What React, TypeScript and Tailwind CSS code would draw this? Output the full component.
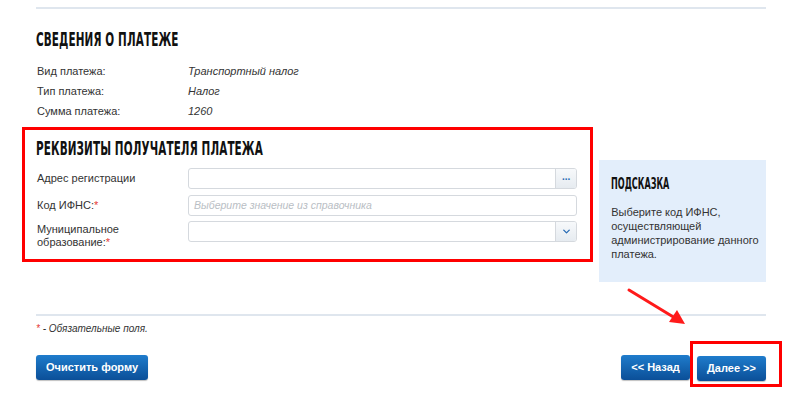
import { ChevronDown } from "lucide-react";

const font = "font-['Liberation_Sans',Arial,sans-serif]";
const headFont = "font-['DejaVu_Sans_Condensed','DejaVu_Sans',sans-serif]";

type Row = { label: string; value: string };

const details: Row[] = [
  { label: "Вид платежа:", value: "Транспортный налог" },
  { label: "Тип платежа:", value: "Налог" },
  { label: "Сумма платежа:", value: "1260" },
];

const Heading = ({ children }: { children: string }) => (
  <h2
    className={`${headFont} font-bold text-[20px] leading-[20px] text-[#111] whitespace-nowrap origin-left scale-x-[0.58] tracking-[0.2px]`}
  >
    {children}
  </h2>
);

const Star = () => <span className="text-[#e53935]">*</span>;

const BlueButton = ({ children, className = "" }: { children: string; className?: string }) => (
  <button
    className={`h-[25px] rounded-[3px] bg-gradient-to-b from-[#1f7ccc] to-[#0b4f98] text-white text-[11px] font-bold shadow-[0_1px_1px_rgba(0,0,0,0.25)] ${className}`}
  >
    {children}
  </button>
);

export default function App() {
  return (
    <div className={`${font} relative w-[800px] h-[393px] bg-white overflow-hidden text-[#333]`}>
      <div className="pl-[36px] pr-[34px]">
        <div className="mt-[7px] h-[2px] bg-[#dfe6ee]" />

        <div className="mt-[20px]">
          <Heading>СВЕДЕНИЯ О ПЛАТЕЖЕ</Heading>
        </div>

        <div className="mt-[12px] text-[11px]">
          {details.map((row) => (
            <div key={row.label} className="flex h-[20px] items-center">
              <span className="w-[152px] pl-[1px]">{row.label}</span>
              <span className="italic">{row.value}</span>
            </div>
          ))}
        </div>

        <div className="mt-[6px] flex items-start">
          <section className="-ml-[14px] w-[572px] h-[135px] border-[3px] border-[#ff0000] pl-[11px] pr-[13px]">
            <div className="mt-[8px]">
              <Heading>РЕКВИЗИТЫ ПОЛУЧАТЕЛЯ ПЛАТЕЖА</Heading>
            </div>

            <div className="mt-[10px] flex items-center h-[21px] text-[11px]">
              <span className="w-[152px] pl-[1px]">Адрес регистрации</span>
              <div className="flex-1 flex h-[21px] border border-[#d5d9de] rounded-[3px] bg-white overflow-hidden">
                <div className="flex-1" />
                <div className="w-[21px] border-l border-[#d5d9de] bg-gradient-to-b from-[#f7f9fb] to-[#e6ebf0] flex items-center justify-center text-[#2a6db5] text-[10px] font-bold leading-none pb-[3px]">
                  ...
                </div>
              </div>
            </div>

            <div className="mt-[6px] flex items-center h-[21px] text-[11px]">
              <span className="w-[152px] pl-[1px]">
                Код ИФНС:<Star />
              </span>
              <div className="flex-1 flex items-center h-[21px] border border-[#d5d9de] rounded-[3px] bg-white px-[5px] italic text-[#b9bec4] text-[10.5px]">
                Выберите значение из справочника
              </div>
            </div>

            <div className="mt-[5px] flex items-start text-[11px]">
              <span className="w-[152px] pl-[1px] leading-[13px] pt-[2px]">
                Муниципальное
                <br />
                образование:<Star />
              </span>
              <div className="flex-1 flex h-[21px] border border-[#d5d9de] rounded-[3px] bg-white overflow-hidden">
                <div className="flex-1" />
                <div className="w-[21px] border-l border-[#d5d9de] bg-gradient-to-b from-[#f7f9fb] to-[#e6ebf0] flex items-center justify-center">
                  <ChevronDown className="w-[11px] h-[11px] text-[#2a6db5]" strokeWidth={3} />
                </div>
              </div>
            </div>
          </section>

          <aside className="ml-[6px] mt-[33px] w-[167px] h-[122px] bg-[#e3eefb] pl-[12px] pr-[2px]">
            <div className="mt-[17px]">
              <h3
                className={`${headFont} font-bold text-[15px] leading-[15px] text-[#111] whitespace-nowrap origin-left scale-x-[0.6]`}
              >
                ПОДСКАЗКА
              </h3>
            </div>
            <p className="mt-[13px] text-[11px] leading-[14px] text-[#333]">
              Выберите код ИФНС,
              <br />
              осуществляющей
              <br />
              администрирование данного
              <br />
              платежа.
            </p>
          </aside>
        </div>

        <div className="mt-[32px] h-[2px] bg-[#dfe6ee]" />

        <p className="mt-[5px] text-[10px] italic">
          <Star /> - Обязательные поля.
        </p>

        <div className="mt-[19px] flex items-start">
          <BlueButton className="w-[112px]">Очистить форму</BlueButton>
          <div className="flex-1" />
          <BlueButton className="w-[69px]">&lt;&lt; Назад</BlueButton>
          <div className="-mt-[14px] -mr-[16px] border-[3px] border-[#ff0000] pt-[11px] pb-[3px] pl-[4px] pr-[13px]">
            <BlueButton className="w-[69px]">Далее &gt;&gt;</BlueButton>
          </div>
        </div>
      </div>

      <svg className="absolute left-[625px] top-[286px]" width="66" height="42" viewBox="0 0 66 42">
        <line x1="4" y1="4" x2="50" y2="32" stroke="#ff1a1a" strokeWidth="3" strokeLinecap="round" />
        <polygon points="60,38 44,36 52,24" fill="#ff1a1a" />
      </svg>
    </div>
  );
}
